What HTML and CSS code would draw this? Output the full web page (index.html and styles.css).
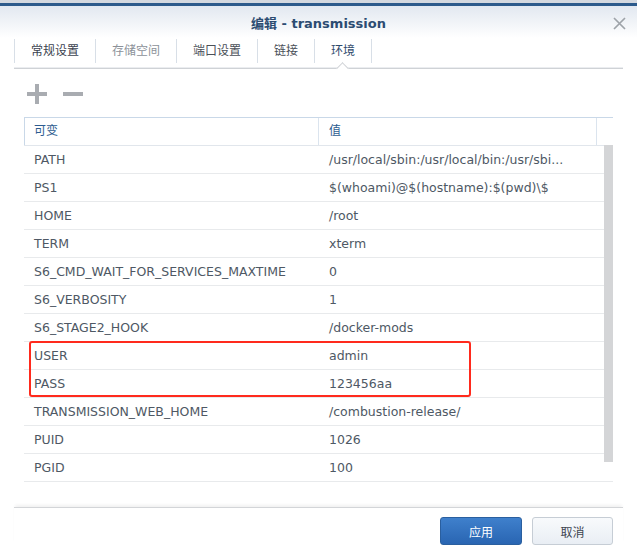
FILE: index.html
```html
<!DOCTYPE html>
<html lang="zh-CN">
<head>
<meta charset="utf-8">
<title>编辑 - transmission</title>
<link rel="stylesheet" href="styles.css">
</head>
<body>
<div class="win">
  <div class="strip-light"></div>
  <div class="strip-blue"></div>
  <div class="titlebar">
    <div class="title">编辑 - transmission</div>
    <svg class="close" width="13" height="13" viewBox="0 0 13 13"><path d="M1 1 L12 12 M12 1 L1 12" stroke="#9ea3a9" stroke-width="1.7" fill="none"/></svg>
  </div>
  <div class="tabs">
    <div class="tab tab-dark">常规设置</div>
    <div class="tab tab-muted">存储空间</div>
    <div class="tab">端口设置</div>
    <div class="tab">链接</div>
    <div class="tab tab-active">环境<span class="notch"></span></div>
  </div>
  <div class="toolbar">
    <svg class="tool" width="20" height="20" viewBox="0 0 20 20"><rect x="0" y="8" width="20" height="4" fill="#a9acb1"/><rect x="8" y="0" width="4" height="20" fill="#a9acb1"/></svg>
    <svg class="tool" width="20" height="20" viewBox="0 0 20 20"><rect x="0" y="8" width="20" height="4" fill="#a9acb1"/></svg>
  </div>
  <div class="grid">
    <div class="head">
      <div class="hcell">可变</div>
      <div class="hcell">值</div>
      <div class="hcell"></div>
    </div>
    <div class="row"><div class="cell">PATH</div><div class="cell">/usr/local/sbin:/usr/local/bin:/usr/sbi...</div><div class="cell"></div></div>
    <div class="row"><div class="cell">PS1</div><div class="cell">$(whoami)@$(hostname):$(pwd)\$</div><div class="cell"></div></div>
    <div class="row"><div class="cell">HOME</div><div class="cell">/root</div><div class="cell"></div></div>
    <div class="row"><div class="cell">TERM</div><div class="cell">xterm</div><div class="cell"></div></div>
    <div class="row"><div class="cell">S6_CMD_WAIT_FOR_SERVICES_MAXTIME</div><div class="cell">0</div><div class="cell"></div></div>
    <div class="row"><div class="cell">S6_VERBOSITY</div><div class="cell">1</div><div class="cell"></div></div>
    <div class="row"><div class="cell">S6_STAGE2_HOOK</div><div class="cell">/docker-mods</div><div class="cell"></div></div>
    <div class="row"><div class="cell">USER</div><div class="cell">admin</div><div class="cell"></div></div>
    <div class="row"><div class="cell">PASS</div><div class="cell">123456aa</div><div class="cell"></div></div>
    <div class="row"><div class="cell">TRANSMISSION_WEB_HOME</div><div class="cell">/combustion-release/</div><div class="cell"></div></div>
    <div class="row"><div class="cell">PUID</div><div class="cell">1026</div><div class="cell"></div></div>
    <div class="row"><div class="cell">PGID</div><div class="cell">100</div><div class="cell"></div></div>
    <div class="scrollbar"></div>
    <div class="highlight"></div>
  </div>
  <div class="footer">
    <button class="btn btn-primary">应用</button>
    <button class="btn btn-default">取消</button>
  </div>
</div>
</body>
</html>
```
FILE: styles.css
```css
html, body {
  margin: 0;
  padding: 0;
  background: #ffffff;
}
.win {
  width: 637px;
  height: 551px;
  font-family: "DejaVu Sans", "Noto Sans CJK SC", sans-serif;
  color: #4e5864;
  overflow: hidden;
}
.strip-light {
  height: 3px;
  background: #d3d8df;
}
.strip-blue {
  height: 3px;
  background: #2c5a8b;
}
.titlebar {
  position: relative;
  height: 32px;
  background: linear-gradient(#e2e8f0, #ffffff);
  display: flex;
  align-items: center;
  justify-content: center;
}
.title {
  font-size: 13px;
  font-weight: bold;
  color: #2c4c72;
  margin-top: 1px;
}
.close {
  position: absolute;
  right: 11px;
  top: 11px;
}
.tabs {
  margin: 0 14px;
  height: 30px;
  display: flex;
  align-items: flex-start;
  border-bottom: 1px solid #cfd2d6;
  box-shadow: 0 -1px 0 #ebedf0 inset;
  position: relative;
}
.tab {
  position: relative;
  margin-top: 1px;
  height: 24px;
  line-height: 24px;
  padding: 0 16px;
  font-size: 12px;
  color: #4a5058;
  border-right: 1px solid #d8dfe7;
}
.tab:first-child {
  border-left: 1px solid #d8dfe7;
  padding-left: 16px;
  margin-left: 0;
}
.tab:first-child { padding-left: 16px; }
.tab-dark { color: #3b4350; }
.tab-muted { color: #8c9199; }
.tab-active { color: #2f4a6c; }
.notch {
  position: absolute;
  left: 50%;
  bottom: -10px;
  width: 8px;
  height: 8px;
  margin-left: -5px;
  background: #ffffff;
  border-left: 1px solid #cfd2d6;
  border-top: 1px solid #cfd2d6;
  transform: rotate(45deg);
}
.toolbar {
  height: 48px;
  padding-left: 27px;
  display: flex;
  align-items: center;
  gap: 16px;
}
.tool { display: block; margin-top: 2px; }
.grid {
  position: relative;
  margin: 0 24px;
  font-size: 12.5px;
}
.head, .row {
  display: grid;
  grid-template-columns: 295px 278px 16px;
}
.head {
  height: 27px;
  border-top: 1px solid #c9d8e8;
  border-bottom: 1px solid #e1e6ec;
}
.hcell {
  line-height: 26px;
  padding-left: 9px;
  color: #2d5c90;
  font-size: 12px;
  border-right: 1px solid #dbe4ee;
}
.hcell:first-child {
  border-left: 1px solid #c9d8e8;
}
.hcell:nth-child(2) { padding-left: 10px; }
.hcell:last-child { border-right: none; }
.row {
  height: 27px;
  border-bottom: 1px solid #e8eaec;
}
.cell {
  line-height: 27px;
  padding-left: 10px;
  white-space: nowrap;
  overflow: hidden;
}
.scrollbar {
  position: absolute;
  left: 580px;
  top: 28px;
  width: 9px;
  height: 317px;
  background: #d4d5d7;
}
.highlight {
  position: absolute;
  left: 5px;
  top: 224px;
  width: 438px;
  height: 52px;
  border: 2px solid #ff2a1d;
  border-radius: 3px;
}
.footer {
  margin: 25px 14px 0;
  border-top: 1px solid #d3d5d8;
  box-shadow: 0 -3px 3px -1px rgba(0,0,0,0.06);
  padding: 9px 10px 0 0;
  display: flex;
  justify-content: flex-end;
  gap: 10px;
}
.btn {
  height: 28px;
  font-family: "Noto Sans CJK SC", sans-serif;
  font-size: 12px;
  border-radius: 3px;
  padding: 0;
  margin: 0;
  cursor: pointer;
}
.btn-primary {
  width: 82px;
  color: #ffffff;
  background: linear-gradient(#3f80cc, #2965b2);
  border: 1px solid #2a5f9f;
}
.btn-default {
  width: 81px;
  color: #3d4450;
  background: linear-gradient(#f8fafc, #e9eef4);
  border: 1px solid #c6cdd5;
}
```
